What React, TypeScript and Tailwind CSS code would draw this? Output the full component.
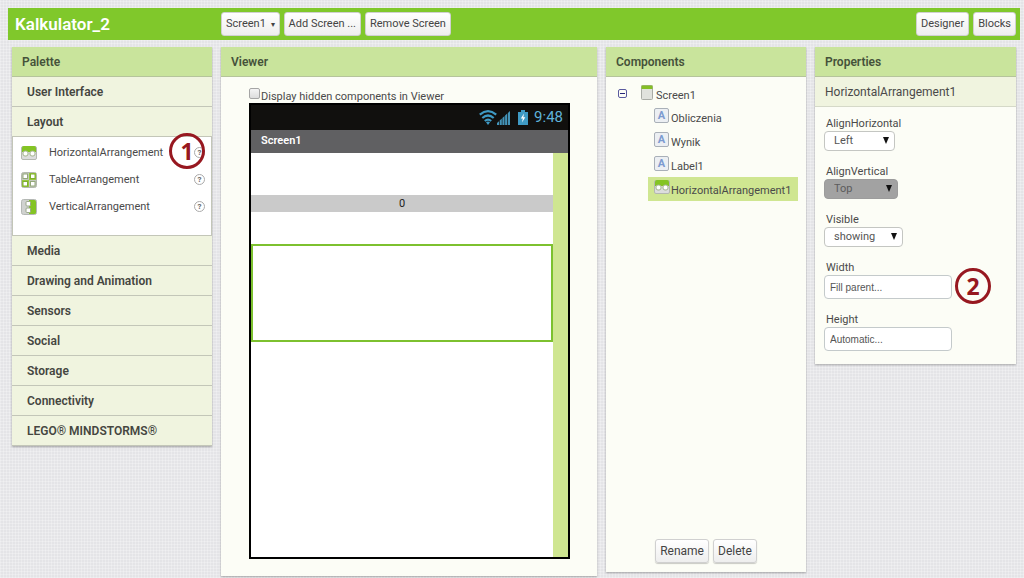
import type { ReactNode } from 'react';
import clsx from 'clsx';

const CATEGORIES = [
  'Media',
  'Drawing and Animation',
  'Sensors',
  'Social',
  'Storage',
  'Connectivity',
  'LEGO® MINDSTORMS®',
];

function HorizontalIcon() {
  return (
    <svg viewBox="0 0 16 16" className="w-4 h-4 shrink-0">
      <rect x="0.5" y="1.5" width="15" height="13" rx="1.500" fill="#dcdddd" stroke="#b4b8b0" />
      <path d="M1 7V3Q1 1 3 1h10Q15 1 15 3v4z" fill="#84c424" />
      <rect x="2" y="6" width="5" height="5" rx="2" fill="#fff" stroke="#a3b38c" />
      <rect x="9" y="6" width="5" height="5" rx="2" fill="#fff" stroke="#a3b38c" />
    </svg>
  );
}

function TableIcon() {
  return (
    <svg viewBox="0 0 16 16" className="w-4 h-4 shrink-0">
      <rect x="0.5" y="0.5" width="15" height="15" rx="2" fill="#c3c8bd" stroke="#b4b9ae" />
      <path d="M8 1h7v7H8zM1 8h7v7H1z" fill="#98c83c" />
      <rect x="2" y="2" width="4.500" height="4.500" fill="#fff" stroke="#93a878" />
      <rect x="9.500" y="2" width="4.500" height="4.500" fill="#fff" stroke="#7fae2e" />
      <rect x="2" y="9.500" width="4.500" height="4.500" fill="#fff" stroke="#7fae2e" />
      <rect x="9.500" y="9.500" width="4.500" height="4.500" fill="#fff" stroke="#93a878" />
    </svg>
  );
}

function VerticalIcon() {
  return (
    <svg viewBox="0 0 16 16" className="w-4 h-4 shrink-0">
      <rect x="0.5" y="0.5" width="15" height="15" rx="2" fill="#d0d2d0" stroke="#b4b8b4" />
      <path d="M8 1h5.500Q15 1 15 2.500v11Q15 15 13.500 15H8z" fill="#84c424" />
      <rect x="5" y="2.500" width="4.500" height="4.500" rx="1" fill="#fff" stroke="#9aa78a" />
      <rect x="5" y="9" width="4.500" height="4.500" rx="1" fill="#fff" stroke="#9aa78a" />
    </svg>
  );
}

function ScreenIcon() {
  return (
    <svg viewBox="0 0 12 16" className="w-3 h-4 shrink-0">
      <rect x="0.5" y="0.5" width="11" height="14" rx="1" fill="#e0e2dd" stroke="#a9aca6" />
      <path d="M0.500 0.500h11V4h-11z" fill="#84bf25" />
    </svg>
  );
}

function LabelIcon() {
  return (
    <span className="flex w-[15px] h-[15px] shrink-0 items-center justify-center rounded-xs border border-[#a9b0b8] bg-[#eceff3] text-[11px] leading-none font-bold text-[#7c9bd0]">
      A
    </span>
  );
}

const LAYOUT_ITEMS = [
  { name: 'HorizontalArrangement', icon: <HorizontalIcon /> },
  { name: 'TableArrangement', icon: <TableIcon /> },
  { name: 'VerticalArrangement', icon: <VerticalIcon /> },
];

const TREE_ITEMS = [
  { name: 'Obliczenia', icon: <LabelIcon /> },
  { name: 'Wynik', icon: <LabelIcon /> },
  { name: 'Label1', icon: <LabelIcon /> },
  { name: 'HorizontalArrangement1', icon: <HorizontalIcon />, selected: true },
];

function Panel({ title, className, children }: { title: string; className?: string; children: ReactNode }) {
  return (
    <section className={clsx('flex flex-col bg-[#fcfdf6] shadow-[0_1px_2px_rgba(0,0,0,0.3)]', className)}>
      <h2 className="h-[30px] border-b border-[#b5c49b] bg-[#c9e49c] pl-[10px] text-[12px] leading-[30px] font-semibold text-[#45523a]">
        {title}
      </h2>
      {children}
    </section>
  );
}

function BarButton({ small, children }: { small?: boolean; children: ReactNode }) {
  return (
    <button
      className={clsx(
        'h-6 rounded-[3px] border border-[#d0d0d0] bg-linear-to-b from-white to-[#eeeeee] px-1 whitespace-nowrap text-[#444]',
        small ? 'text-[11px]' : 'text-[12px] shadow-[0_1px_1px_rgba(0,0,0,0.2)]'
      )}
    >
      {children}
    </button>
  );
}

function Category({ name }: { name: string }) {
  return (
    <button className="block h-[30px] w-full border-b border-[#c3c6b8] bg-[#f0f4df] pt-px pl-[15px] text-left text-[12px] font-semibold text-[#45463f]">
      {name}
    </button>
  );
}

function Marker({ n, className }: { n: number; className: string }) {
  return (
    <span
      className={clsx(
        "pointer-events-none absolute flex h-9 w-9 items-center justify-center rounded-full border-[3px] border-[#971820] font-['Open_Sans',sans-serif] text-[23px] leading-none font-bold text-[#971820]",
        className
      )}
    >
      {n}
    </span>
  );
}

function SelectField({ id, label, value, width, disabled }: {
  id: string;
  label: string;
  value: string;
  width: string;
  disabled?: boolean;
}) {
  return (
    <div>
      <label htmlFor={id} className="block h-4 pl-0.5 leading-[18px]">{label}</label>
      <div className={clsx('relative', width)}>
        <select
          id={id}
          disabled={disabled}
          className={clsx(
            'block h-5 w-full appearance-none rounded-[4px] border pt-px pl-[9px] text-[11px]',
            disabled ? 'border-[#9c9c9c] bg-[#a2a2a2] text-[#5c5c5c] opacity-100' : 'border-[#c4c6c2] bg-white text-[#555]'
          )}
        >
          <option>{value}</option>
        </select>
        <svg viewBox="0 0 6 7" className="pointer-events-none absolute top-[6px] right-[6px] h-[7px] w-[6px]">
          <path d="M0 0h6L3 7z" fill="#111" />
        </svg>
      </div>
    </div>
  );
}

function TextField({ id, label, value }: { id: string; label: string; value: string }) {
  return (
    <div className="w-32">
      <label htmlFor={id} className="block h-4 pl-0.5 leading-[18px]">{label}</label>
      <input
        id={id}
        defaultValue={value}
        className="block h-6 w-full rounded-[4px] border border-[#c4cacb] bg-white px-[5px] font-['Liberation_Sans',Arial,sans-serif] text-[10px] text-[#555]"
      />
    </div>
  );
}

function StatusBar() {
  return (
    <div className="flex h-[25px] items-center justify-end bg-[#11100e] pr-[5px] text-[#5fb3d9]">
      <svg viewBox="0 0 18 15" className="h-[15px] w-[18px]" fill="none" stroke="#3f9ac4" strokeWidth="2.200">
        <path d="M0.800 4.600Q9-2.200 17.200 4.600M3.300 8Q9 3 14.700 8M5.800 11Q9 8.300 12.200 11" />
        <path d="M7 12.200Q9 11 11 12.200L9 15z" fill="#3f9ac4" stroke="none" />
      </svg>
      <svg viewBox="0 0 13 14" className="h-[14px] w-[13px]" fill="#4393b8">
        <path d="M0 14v-2l2-1.800V14zM2.700 14V9.600L4.800 7.600V14zM5.400 14V7l2.100-2V14zM8.100 14V4.400l2.100-1.900V14zM10.900 14V1.900L13 0v14z" />
      </svg>
      <svg viewBox="0 0 10 15" className="ml-2 h-[15px] w-[10px]">
        <path d="M3 0h4v2h3v13H0V2h3z" fill="#3f9ac4" />
        <path d="M6 3.500L2.800 8.500h2L4 12.500l3.300-5.200h-2z" fill="#fff" />
      </svg>
      <span className="ml-[6px] text-[15px] leading-none">9:48</span>
    </div>
  );
}

export default function App() {
  return (
    <div className="min-h-screen bg-[#e4e4e7] bg-[repeating-linear-gradient(0deg,rgba(255,255,255,0.25)_0_1px,transparent_1px_3px),repeating-linear-gradient(90deg,rgba(255,255,255,0.25)_0_1px,transparent_1px_3px)] pt-2 font-[Roboto,sans-serif] text-[11px] text-[#4a4a4a]">
      <header className="mr-1 ml-2 flex h-8 items-center gap-1 bg-[#80c82b] pr-1 pl-[7px]">
        <h1 className="w-[202px] shrink-0 text-[17px] leading-[34px] font-semibold text-white">Kalkulator_2</h1>
        <BarButton small>
          Screen1 <span className="ml-0.5 text-[8px]">▾</span>
        </BarButton>
        <BarButton small>Add Screen ...</BarButton>
        <BarButton small>Remove Screen</BarButton>
        <div className="ml-auto flex gap-1">
          <BarButton small>Designer</BarButton>
          <BarButton small>Blocks</BarButton>
        </div>
      </header>

      <main className="flex items-start gap-[9px] pt-[7px] pr-2 pl-3">
        <Panel title="Palette" className="w-[200px] shrink-0">
          <Category name="User Interface" />
          <Category name="Layout" />
          <ul className="relative border-x border-b border-[#c3c6b8] bg-white pt-0.5 pb-[15px]">
            {LAYOUT_ITEMS.map((item) => (
              <li key={item.name} className="flex h-[27px] items-center pr-1.5 pl-2">
                {item.icon}
                <span className="ml-3 pt-0.5">{item.name}</span>
                <button
                  aria-label={`Help for ${item.name}`}
                  className="ml-auto flex h-[11px] w-[11px] items-center justify-center rounded-full border border-[#aaa] text-[8px] leading-none font-bold text-[#666]"
                >
                  ?
                </button>
              </li>
            ))}
            <Marker n={1} className="-top-[4px] right-[6px]" />
          </ul>
          {CATEGORIES.map((name) => (
            <Category key={name} name={name} />
          ))}
        </Panel>

        <Panel title="Viewer" className="min-w-0 flex-1">
          <div className="pt-[11px] pr-[27px] pb-[17px] pl-7">
            <label className="flex h-[15px] items-start">
              <input
                type="checkbox"
                className="h-[11px] w-[11px] shrink-0 appearance-none rounded-xs border border-[#a5a5a5] bg-linear-to-b from-[#f4f4f4] to-[#dddddd]"
              />
              <span className="ml-px leading-[18px]">Display hidden components in Viewer</span>
            </label>
            <div className="border-2 border-black bg-white">
              <StatusBar />
              <div className="h-[23px] bg-[#606062] pl-[10px] leading-[22px] font-semibold text-white">
                Screen1
              </div>
              <div className="flex h-[404px]">
                <div className="flex-1 pt-[42px]">
                  <div className="h-[17px] bg-[#cacaca] text-center leading-[18px] text-[#222]">0</div>
                  <div className="mt-8 h-[98px] border-2 border-[#7dc12f]" />
                </div>
                <div className="w-[15px] bg-[#cfe691]" />
              </div>
            </div>
          </div>
        </Panel>

        <Panel title="Components" className="w-[200px] shrink-0">
          <div className="h-[457px] pt-1">
            <div className="flex h-6 items-center pl-3">
              <button
                aria-label="Collapse Screen1"
                className="flex h-[9px] w-[9px] items-center justify-center rounded-xs border border-[#5a5a9e]"
              >
                <span className="h-px w-[5px] bg-[#26267a]" />
              </button>
              <span className="ml-[14px] flex">
                <ScreenIcon />
              </span>
              <span className="ml-[3px] pt-1.5">Screen1</span>
            </div>
            <ul>
              {TREE_ITEMS.map((item) => (
                <li
                  key={item.name}
                  className={clsx(
                    'mr-2 ml-[42px] flex h-6 items-center pl-1.5',
                    item.selected && 'bg-[#cfe691]'
                  )}
                >
                  <span className="flex w-4 pb-1">{item.icon}</span>
                  <span className="ml-px pt-1">{item.name}</span>
                </li>
              ))}
            </ul>
          </div>
          <div className="flex justify-center gap-1 pt-[5px] pb-[9px]">
            <BarButton>Rename</BarButton>
            <BarButton>Delete</BarButton>
          </div>
        </Panel>

        <Panel title="Properties" className="w-[201px] shrink-0">
          <h3 className="h-[30px] border-b border-[#d5d9c8] bg-[#f0f4df] pl-[10px] text-[12px] leading-[30px]">
            HorizontalArrangement1
          </h3>
          <form className="relative flex flex-col gap-3 pt-2 pb-[13px] pl-[9px]">
            <SelectField id="align-h" label="AlignHorizontal" value="Left" width="w-[71px]" />
            <SelectField id="align-v" label="AlignVertical" value="Top" width="w-[74px]" disabled />
            <SelectField id="visible" label="Visible" value="showing" width="w-[79px]" />
            <TextField id="width" label="Width" value="Fill parent..." />
            <TextField id="height" label="Height" value="Automatic..." />
            <Marker n={2} className="top-[161px] left-[140px]" />
          </form>
        </Panel>
      </main>
    </div>
  );
}
